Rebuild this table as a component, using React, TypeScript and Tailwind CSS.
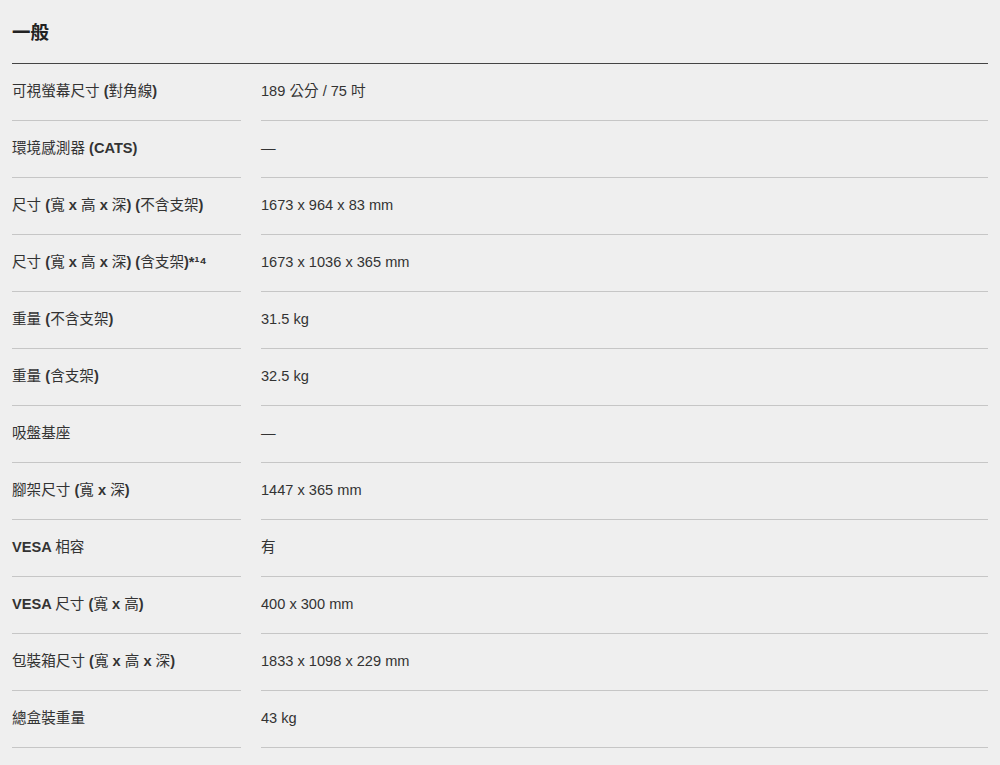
import React from "react";

const rows: [string, string][] = [
  ["可視螢幕尺寸 (對角線)", "189 公分 / 75 吋"],
  ["環境感測器 (CATS)", "—"],
  ["尺寸 (寬 x 高 x 深) (不含支架)", "1673 x 964 x 83 mm"],
  ["尺寸 (寬 x 高 x 深) (含支架)*¹⁴", "1673 x 1036 x 365 mm"],
  ["重量 (不含支架)", "31.5 kg"],
  ["重量 (含支架)", "32.5 kg"],
  ["吸盤基座", "—"],
  ["腳架尺寸 (寬 x 深)", "1447 x 365 mm"],
  ["VESA 相容", "有"],
  ["VESA 尺寸 (寬 x 高)", "400 x 300 mm"],
  ["包裝箱尺寸 (寬 x 高 x 深)", "1833 x 1098 x 229 mm"],
  ["總盒裝重量", "43 kg"],
];

function Label({ text }: { text: string }) {
  const parts = text.split(/([\u3400-\u9fff]+)/).filter((p) => p.length > 0);
  return (
    <>
      {parts.map((p, i) =>
        /[\u3400-\u9fff]/.test(p) ? (
          <span key={i} className="font-normal">
            {p}
          </span>
        ) : (
          <span key={i} className="font-bold">
            {p}
          </span>
        )
      )}
    </>
  );
}

export default function App() {
  return (
    <div
      className="min-h-[765px] w-full bg-[#efefef] px-3 text-[#333333]"
      style={{ fontFamily: '"Liberation Sans", "Noto Sans CJK TC", sans-serif' }}
    >
      <div className="border-b border-[#444444] pt-[20px] pb-[17px]">
        <h2 className="text-[18.5px] leading-[26px] font-bold text-[#222222]">一般</h2>
      </div>
      <div>
        {rows.map(([k, v], i) => (
          <div key={i} className="flex gap-5">
            <div className="flex h-[57px] w-[229px] shrink-0 items-center border-b border-[#c6c6c6] pb-[2px] text-[14.6px] text-[#333333]">
              <span className="leading-5">
                <Label text={k} />
              </span>
            </div>
            <div className="flex h-[57px] flex-1 items-center border-b border-[#c6c6c6] pb-[2px] text-[14.6px] text-[#333333]">
              <span className="leading-5">{v}</span>
            </div>
          </div>
        ))}
      </div>
    </div>
  );
}
